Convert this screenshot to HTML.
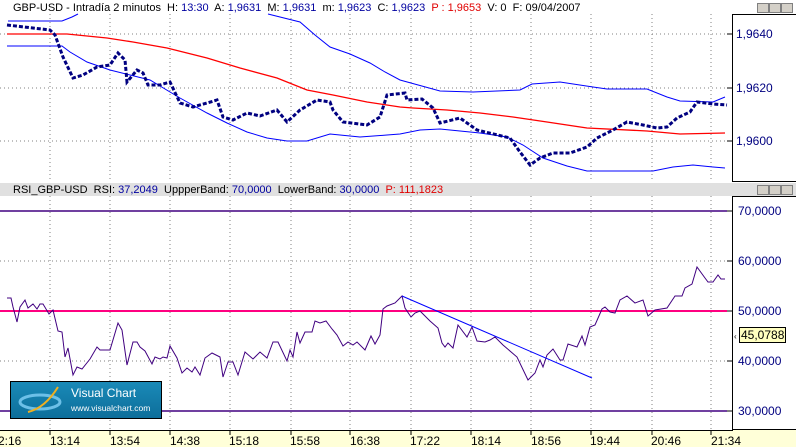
<!DOCTYPE html><html><head><style>
body{margin:0;width:796px;height:447px;overflow:hidden;background:#fff;font-family:"Liberation Sans",sans-serif;position:relative}
svg text{white-space:pre}
</style></head><body>
<svg width="796" height="447" style="position:absolute;left:0;top:0" font-family="Liberation Sans" font-size="11" xml:space="preserve">
<rect x="0" y="0" width="796" height="447" fill="#fff"/>
<text x="13" y="11" fill="#000">GBP-USD - Intradía 2 minutos  H: <tspan fill="#0000a0">13:30</tspan>  A: <tspan fill="#0000a0">1,9631</tspan>  M: <tspan fill="#0000a0">1,9631</tspan>  m: <tspan fill="#0000a0">1,9623</tspan>  C: <tspan fill="#0000a0">1,9623</tspan>  <tspan fill="#e00000">P : 1,9653</tspan>  V: 0  F: 09/04/2007</text>
<g fill="#d4d0c8" stroke="#808080" stroke-width="1"><rect x="757.5" y="3.5" width="11" height="9"/><rect x="769.5" y="3.5" width="11" height="9"/><rect x="781.5" y="3.5" width="11" height="9"/></g>
<g stroke="#808080" stroke-dasharray="1,3">
<path d="M50 14V181M110 14V181M170 14V181M230 14V181M291 14V181M350 14V181M411 14V181M471 14V181M531 14V181M591 14V181M652 14V181M711 14V181M0 34H727M0 88H727M0 141H727"/>
<path d="M50 196V430M110 196V430M170 196V430M230 196V430M291 196V430M350 196V430M411 196V430M471 196V430M531 196V430M591 196V430M652 196V430M711 196V430M0 261H727M0 361H727"/>
</g>
<rect x="732.5" y="14.5" width="70" height="167" fill="none" stroke="#000"/>
<g fill="#000080" font-size="12"><text x="736" y="38">1,9640</text><text x="736" y="92">1,9620</text><text x="736" y="145">1,9600</text></g>
<path d="M727 34h5M727 88h5M727 141h5" stroke="#000"/>
<polyline fill="none" stroke="#0000ff" points="8,21 62,21 72,17 78,14"/>
<polyline fill="none" stroke="#0000ff" points="268,14 300,22 315,35 330,47 350,54 370,63 385,72 400,80 440,91 473,92 520,90 532,84 560,82 593,87 607,89 647,89 667,97 680,101 713,102 725,97"/>
<polyline fill="none" stroke="#0000ff" points="7,46 62,46 70,52 87,62 110,70 150,80 180,98 207,113 227,123 247,132 267,138 287,141 307,141 330,134 360,137 387,135 400,134 420,130 440,129 460,131 480,133 507,137 523,145 543,158 567,166 587,171 653,171 673,167 693,165 713,167 725,168"/>
<polyline fill="none" stroke="#ff0000" stroke-width="1.3" points="7,34 67,34 107,38 133,42 167,48 207,58 240,68 277,78 307,90 333,95 367,102 400,107 413,108 447,110 480,113 513,117 547,122 587,128 647,131 680,134 725,133"/>
<polyline fill="none" stroke="#000080" stroke-width="3" stroke-dasharray="4,2" points="7,25 50,30 55,35 63,57 73,78 83,75 97,67 110,65 118,53 125,60 127,82 137,70 143,73 148,85 160,85 170,82 180,103 193,107 207,103 217,100 223,117 233,120 247,113 260,116 277,110 287,122 300,110 317,100 330,102 333,110 343,122 367,125 380,117 387,95 405,93 407,100 422,99 433,108 440,123 460,118 477,130 510,138 520,152 530,165 540,158 553,153 570,153 587,147 597,138 613,130 627,122 643,125 657,128 667,127 677,118 690,112 697,102 713,104 727,105"/>
<rect x="0" y="183" width="796" height="13" fill="#e0e0e0"/>
<text x="13" y="193">RSI_GBP-USD  RSI: <tspan fill="#0000a0">37,2049</tspan>  UppperBand: <tspan fill="#0000a0">70,0000</tspan>  LowerBand: <tspan fill="#0000a0">30,0000</tspan>  <tspan fill="#e00000">P: 111,1823</tspan></text>
<g fill="#d4d0c8" stroke="#808080"><rect x="757.5" y="185.5" width="11" height="9"/><rect x="769.5" y="185.5" width="11" height="9"/><rect x="781.5" y="185.5" width="11" height="9"/></g>
<rect x="732.5" y="196.5" width="70" height="233" fill="none" stroke="#000"/>
<g fill="#000080" font-size="12"><text x="738" y="215">70,0000</text><text x="738" y="265">60,0000</text><text x="738" y="315">50,0000</text><text x="738" y="365">40,0000</text><text x="738" y="415">30,0000</text></g>
<path d="M727 211h5M727 261h5M727 311h5M727 361h5M727 411h5" stroke="#000"/>
<rect x="739.5" y="327.5" width="46" height="15" fill="#ffffc0" stroke="#000"/>
<text x="741" y="339" font-size="12" fill="#000">45,0788</text>
<text x="734" y="339" font-size="8">‹</text>
<path d="M0 211H727M0 411H727" stroke="#400080" stroke-width="1.5"/>
<path d="M0 311H727" stroke="#ff0080" stroke-width="2"/>
<polyline fill="none" stroke="#400080" points="7,298 11,298 13,307 17,322 20,307 25,300 28,308 33,304 37,309 40,304 43,304 49,314 53,310 58,331 62,332 65,357 68,348 73,375 77,367 82,369 90,359 97,347 100,350 110,350 118,323 122,330 127,365 133,342 137,342 140,347 145,351 152,364 155,357 160,359 163,357 167,358 170,346 177,358 182,373 187,368 192,372 195,367 200,375 205,358 212,353 220,357 223,377 228,362 233,362 238,375 245,352 253,359 260,352 267,358 273,342 278,342 287,361 290,350 293,357 297,332 300,343 305,332 312,332 315,321 320,323 326,321 332,329 337,335 343,346 348,342 353,345 357,342 365,350 371,336 375,344 380,335 383,309 387,306 395,303 402,296 405,308 411,317 415,313 420,311 430,321 438,328 442,343 445,347 448,343 453,348 458,325 467,337 472,327 477,341 485,342 490,340 495,337 503,345 517,357 528,380 535,373 540,360 543,367 547,355 553,349 560,360 563,360 568,344 577,347 582,336 585,345 590,327 595,325 602,309 605,307 610,312 615,313 620,300 627,296 635,303 643,300 648,316 655,310 667,308 675,296 682,296 685,288 692,284 697,267 705,278 708,282 713,282 718,275 721,279 725,279"/>
<path d="M402 296L592 378" stroke="#0000ff"/>
<defs><linearGradient id="g" x1="0" y1="0" x2="0" y2="1"><stop offset="0" stop-color="#1a8ab8"/><stop offset="1" stop-color="#0d6e9a"/></linearGradient></defs>
<rect x="10.5" y="381.5" width="151" height="37" fill="url(#g)" stroke="#000"/>
<ellipse cx="40" cy="402" rx="20" ry="7" fill="none" stroke="#6cc0e8" stroke-width="3"/>
<path d="M28 412 Q45 408 58 387" stroke="#f0b020" stroke-width="2" fill="none"/>
<text x="71" y="397" fill="#fff" font-size="12">Visual Chart</text>
<text x="71" y="411" fill="#fff" font-size="8.5">www.visualchart.com</text>
<rect x="0" y="430" width="796" height="17" fill="#ffffd8"/>
<path d="M0 430.5H733" stroke="#000"/>
<path d="M50 430v5M110 430v5M170 430v5M230 430v5M291 430v5M350 430v5M411 430v5M471 430v5M531 430v5M591 430v5M652 430v5M711 430v5" stroke="#000"/>
<g font-size="12" fill="#000"><text x="-2" y="445">2:16</text><text x="50" y="445">13:14</text><text x="110" y="445">13:54</text><text x="170" y="445">14:38</text><text x="229" y="445">15:18</text><text x="290" y="445">15:58</text><text x="350" y="445">16:38</text><text x="410" y="445">17:22</text><text x="471" y="445">18:14</text><text x="531" y="445">18:56</text><text x="590" y="445">19:44</text><text x="651" y="445">20:46</text><text x="711" y="445">21:34</text></g>
</svg>
</body></html>
